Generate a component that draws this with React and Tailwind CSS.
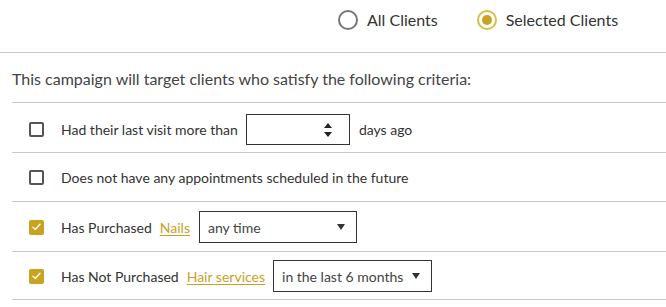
import React, { useState } from 'react';

const Check = ({ checked, onClick }) => (
  <button
    type="button"
    onClick={onClick}
    className={`w-[15px] h-[15px] shrink-0 rounded-[2px] flex items-center justify-center ${checked ? 'bg-[#c9a21f]' : 'border-2 border-[#555]'}`}
  >
    {checked && (
      <svg width="9" height="8" viewBox="0 0 9 8" fill="none">
        <path d="M1 4.2 L3.4 6.4 L8 1.2" stroke="white" strokeWidth="1.4" strokeLinecap="round" strokeLinejoin="round" />
      </svg>
    )}
  </button>
);

const Radio = ({ on, label, onClick }) => (
  <button type="button" onClick={onClick} className="flex items-center gap-[9px]">
    <span className={`w-[20px] h-[20px] rounded-full border-2 flex items-center justify-center ${on ? 'border-[#d8bd4a]' : 'border-[#777]'}`}>
      {on && <span className="w-[10px] h-[10px] rounded-full bg-[#c9a21f]" />}
    </span>
    <span className="text-[16px] text-[#333]">{label}</span>
  </button>
);

const Select = ({ value, width }) => (
  <div className={`${width} h-[32px] border border-[#333] flex items-center justify-between pl-[8px] pr-[11px] text-[14px] text-[#444]`}>
    <span>{value}</span>
    <svg width="8" height="6" viewBox="0 0 8 6"><path d="M0 0 H8 L4 6 Z" fill="#333" /></svg>
  </div>
);

export default function App() {
  const [mode, setMode] = useState('selected');
  const [checks, setChecks] = useState([false, false, true, true]);
  const toggle = (i) => setChecks(checks.map((c, j) => (j === i ? !c : c)));

  return (
    <div className="w-[666px] h-[307px] bg-white text-[#333] overflow-hidden" style={{ fontFamily: 'Lato, "Open Sans", sans-serif' }}>
      <div className="h-[53px] border-b border-[#c8c8c8] flex items-start pt-[8px] pl-[338px] gap-[39px]">
        <Radio on={mode === 'all'} label="All Clients" onClick={() => setMode('all')} />
        <Radio on={mode === 'selected'} label="Selected Clients" onClick={() => setMode('selected')} />
      </div>
      <div className="ml-[12px]">
        <div className="h-[50px] border-b border-[#c8c8c8] flex items-center pt-[2px] text-[16px] text-[#444]">
          This campaign will target clients who satisfy the following criteria:
        </div>
        <div className="h-[50px] border-b border-[#c8c8c8] flex items-center pl-[17px] gap-[17px] pt-[4px] text-[14px]">
          <Check checked={checks[0]} onClick={() => toggle(0)} />
          <div className="flex items-center">
            <span>Had their last visit more than</span>
            <div className="ml-[8px] w-[104px] h-[31px] border border-[#333] flex items-center justify-end pr-[17px]">
              <svg width="8" height="14" viewBox="0 0 8 14">
                <path d="M4 0 L8 5 H0 Z" fill="#222" />
                <path d="M0 9 H8 L4 14 Z" fill="#222" />
              </svg>
            </div>
            <span className="ml-[9px]">days ago</span>
          </div>
        </div>
        <div className="h-[49px] border-b border-[#c8c8c8] flex items-center pl-[17px] gap-[17px] pt-[1px] text-[14px]">
          <Check checked={checks[1]} onClick={() => toggle(1)} />
          <span>Does not have any appointments scheduled in the future</span>
        </div>
        <div className="h-[50px] border-b border-[#c8c8c8] flex items-center pl-[17px] gap-[17px] pt-[1px] text-[14px]">
          <Check checked={checks[2]} onClick={() => toggle(2)} />
          <div className="flex items-center">
            <span>Has Purchased</span>
            <a href="#" className="ml-[8px] underline text-[#c9a21f] underline-offset-2">Nails</a>
            <div className="ml-[9px]"><Select value="any time" width="w-[158px]" /></div>
          </div>
        </div>
        <div className="h-[48px] border-b border-[#c8c8c8] flex items-center pl-[17px] gap-[17px] pt-[1px] text-[14px]">
          <Check checked={checks[3]} onClick={() => toggle(3)} />
          <div className="flex items-center">
            <span>Has Not Purchased</span>
            <a href="#" className="ml-[8px] underline text-[#c9a21f] underline-offset-2">Hair services</a>
            <div className="ml-[8px]"><Select value="in the last 6 months" width="w-[159px]" /></div>
          </div>
        </div>
      </div>
    </div>
  );
}
